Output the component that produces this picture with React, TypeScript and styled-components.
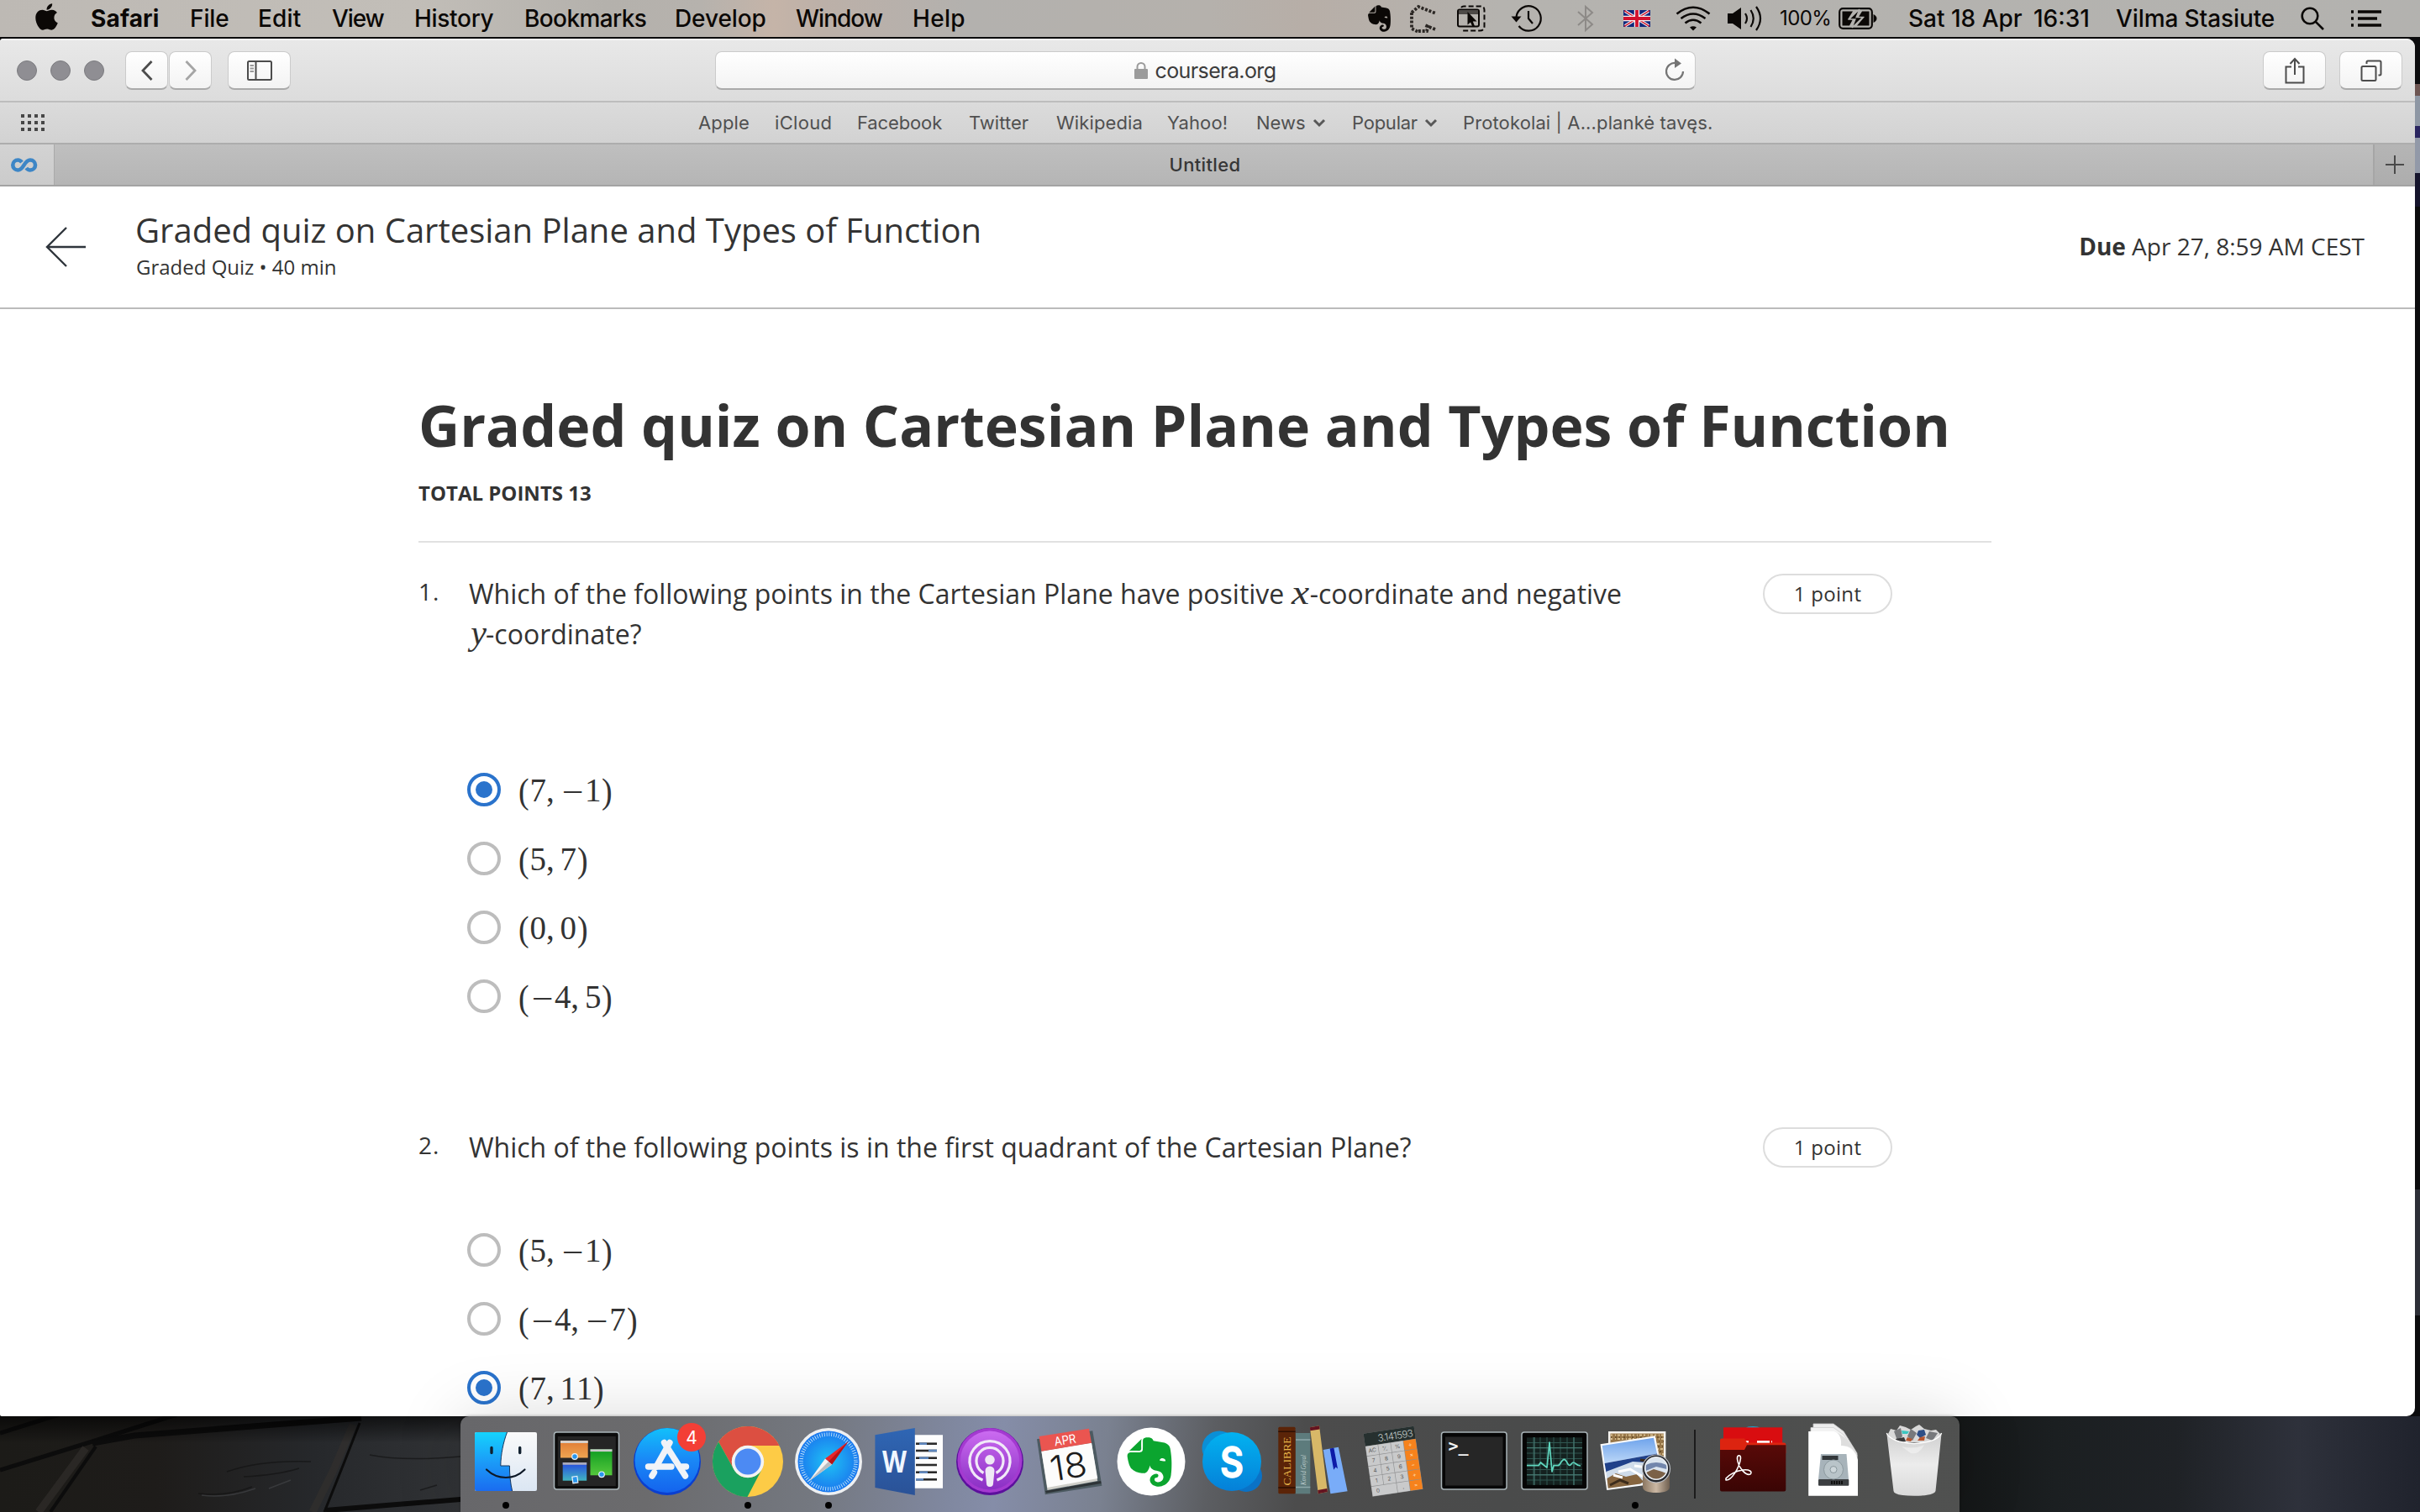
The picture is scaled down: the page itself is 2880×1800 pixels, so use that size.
import React from "react";
import styled, { createGlobalStyle } from "styled-components";
import { FaApple, FaEvernote } from "react-icons/fa";

const ui = `Inter, "Liberation Sans", sans-serif`;
const page = `"Open Sans", "Noto Sans", sans-serif`;
const math = `"Liberation Serif", serif`;

const GlobalStyle = createGlobalStyle`
  html, body { margin: 0; padding: 0; background: #111; }
  * { box-sizing: border-box; }
  svg { display: block; flex: none; overflow: visible; }
`;

const Desktop = styled.div`
  position: relative;
  width: 2880px;
  height: 1800px;
  overflow: hidden;
  display: flex;
  flex-direction: column;
  background: #0b0b0c;
`;

const Wallpaper = styled.svg`
  position: absolute;
  inset: 0;
`;

/* ---------- menu bar ---------- */

const MenuBar = styled.header`
  position: relative;
  flex: none;
  height: 44px;
  display: flex;
  align-items: center;
  justify-content: space-between;
  background: linear-gradient(90deg, #bdb9b4 0%, #c2beb8 17%, #b4b1ac 25%, #b6b2ad 29%, #c5b4a8 32%, #bcb0a8 34%, #b3b1ae 40%, #b5b1ac 50%, #b7aea7 54%, #b5b3af 62%, #b3b2af 100%);
  font: 450 28px/44px ${ui};
  color: #0b0806;
  white-space: pre;
`;

const MenuGroup = styled.div<{ $left?: number }>`
  display: flex;
  align-items: center;
  height: 44px;
  padding-left: ${(p) => p.$left ?? 0}px;
`;

const MenuItem = styled.span<{ $w: number; $track?: number; $bold?: boolean; $small?: boolean }>`
  flex: none;
  display: flex;
  align-items: center;
  width: ${(p) => p.$w}px;
  letter-spacing: ${(p) => p.$track ?? 0}px;
  font-weight: ${(p) => (p.$bold ? 700 : 450)};
  ${(p) => p.$small && "font-size: 24px; font-weight: 400;"}
`;

const AppleMark = styled(FaApple)`
  width: 27px;
  height: 36px;
  margin-top: -4px;
`;

const EvernoteMark = styled(FaEvernote)`
  width: 27px;
  height: 36px;
`;

const EvernoteLogo = styled(FaEvernote)`
  width: 53px;
  height: 67px;
  color: #0ba52f;
`;

/* ---------- browser window ---------- */

const BrowserWindow = styled.main`
  position: relative;
  flex: none;
  width: 2874px;
  height: 1640px;
  margin-top: 2px;
  overflow: hidden;
  display: flex;
  flex-direction: column;
  background: #fff;
  border-radius: 4px 10px 10px 2px;
`;

const Toolbar = styled.div`
  flex: none;
  height: 76px;
  display: flex;
  align-items: center;
  padding: 0 15px 0 20px;
  background: linear-gradient(#e8e8e8, #dcdcdc);
  border-top: 2px solid #f5f5f5;
  border-bottom: 2px solid #bdbdbd;
`;

const ToolGroup = styled.div<{ $gap: number; $end?: boolean }>`
  display: flex;
  align-items: center;
  gap: ${(p) => p.$gap}px;
  ${(p) => p.$end && "margin-left: auto;"}
`;

const TrafficLight = styled.i`
  width: 24px;
  height: 24px;
  margin-right: 16px;
  border-radius: 50%;
  border: 1px solid #7b7b7f;
  background: #8f8e93;
`;

const ToolButton = styled.button<{ $w: number; $ml?: number }>`
  width: ${(p) => p.$w}px;
  height: 46px;
  margin: 0 0 0 ${(p) => p.$ml ?? 0}px;
  padding: 0;
  display: flex;
  align-items: center;
  justify-content: center;
  border: 1px solid #cbcbcb;
  border-bottom: 2px solid #aaa;
  border-radius: 8px;
  background: linear-gradient(#fff, #f3f3f3);
`;

const AddressBar = styled.div`
  width: 1167px;
  height: 46px;
  margin-left: 505px;
  padding: 1px 12px 0;
  display: grid;
  grid-template-columns: 1fr auto 1fr;
  align-items: center;
  border: 1px solid #cbcbcb;
  border-bottom: 2px solid #aaa;
  border-radius: 8px;
  background: linear-gradient(#fff, #f3f3f3);
  font: 400 25px/42px ${ui};
  letter-spacing: -0.6px;
  color: #3c3c3c;
`;

const Address = styled.span`
  grid-column: 2;
  display: flex;
  align-items: center;
  gap: 8px;
`;

const ReloadSpot = styled.span`
  justify-self: end;
  margin-top: -3px;
`;

const Favorites = styled.nav`
  flex: none;
  height: 50px;
  display: flex;
  align-items: center;
  padding-left: 25px;
  background: linear-gradient(#dbdbdb, #d2d2d2);
  border-bottom: 2px solid #adadad;
  font: 400 22px/48px ${ui};
  color: #505050;
  white-space: pre;
`;

const Favorite = styled.span<{ $w: number; $track?: number }>`
  flex: none;
  display: flex;
  align-items: center;
  gap: 8px;
  width: ${(p) => p.$w}px;
  letter-spacing: ${(p) => (p.$track ?? 0) + 0.12}px;
`;

const GridSpot = styled.span`
  flex: none;
  width: 806px;
`;

const TabBar = styled.div`
  flex: none;
  height: 50px;
  display: flex;
  background: linear-gradient(#bfbfbf, #b5b5b5);
  border-bottom: 2px solid #a3a3a3;
`;

const PinnedTab = styled.div`
  width: 65px;
  display: flex;
  align-items: center;
  padding-left: 13px;
  background: linear-gradient(#d3d3d3, #cbcbcb);
  border-right: 1px solid #a9a9a9;
`;

const ActiveTab = styled.div`
  flex: 1;
  text-align: center;
  padding-right: 21px;
  font: 450 22px/48px ${ui};
  letter-spacing: 0.35px;
  color: #363636;
`;

const NewTab = styled.div`
  width: 50px;
  display: flex;
  align-items: center;
  justify-content: center;
  border-left: 2px solid #a6a6a6;
  background: linear-gradient(#b5b5b5, #adadad);
`;

/* ---------- quiz page ---------- */

const QuizHeader = styled.div`
  flex: none;
  height: 146px;
  display: flex;
  padding: 24px 60px 0 54px;
  border-bottom: 2px solid #bbb;
  font-family: ${page};
  color: #333;
`;

const BackSpot = styled.div`
  width: 107px;
  padding-top: 24px;
`;

const HeaderTitles = styled.div`
  flex: 1;
`;

const HeaderTitle = styled.div`
  font-size: 40px;
  line-height: 55px;
`;

const HeaderSub = styled.div`
  padding-left: 1px;
  font-size: 24px;
  line-height: 33px;
`;

const Due = styled.div`
  padding-top: 29px;
  font-size: 28px;
  line-height: 36px;
`;

const Quiz = styled.section`
  width: 1872px;
  margin-left: 498px;
  padding-top: 89px;
  font-family: ${page};
  color: #333;
`;

const QuizTitle = styled.h1`
  margin: 0;
  font-size: 68px;
  line-height: 97px;
  font-weight: 700;
  white-space: nowrap;
`;

const TotalPoints = styled.div`
  padding: 15px 0 0;
  height: 92px;
  font-size: 24px;
  line-height: 36px;
  font-weight: 700;
  border-bottom: 2px solid #e1e1e1;
`;

const Question = styled.article<{ $top: number }>`
  display: grid;
  grid-template-columns: 60px 1fr 272px;
  padding-top: ${(p) => p.$top}px;
`;

const Num = styled.div`
  font-size: 28px;
  line-height: 42px;
  letter-spacing: 1px;
`;

const Prompt = styled.div`
  font-size: 32px;
  line-height: 48px;
`;

const Variable = styled.i<{ $w: number; $pad?: number; $scale: number }>`
  display: inline-block;
  width: ${(p) => p.$w}px;
  padding-left: ${(p) => p.$pad ?? 0}px;
  font: italic 400 39px/0 ${math};
  transform: scaleX(${(p) => p.$scale});
  transform-origin: left;
`;

const Points = styled.div`
  width: 154px;
  height: 48px;
  border: 2px solid #ddd;
  border-radius: 24px;
  text-align: center;
  font-size: 24px;
  line-height: 44px;
  letter-spacing: 0.3px;
`;

const Options = styled.div<{ $top: number }>`
  grid-column: 2 / 4;
  padding-top: ${(p) => p.$top}px;
  margin-left: -2px;
`;

const Option = styled.label`
  height: 82px;
  display: flex;
  align-items: center;
  gap: 20px;
`;

const Radio = styled.span<{ $on?: boolean }>`
  width: 40px;
  height: 40px;
  display: flex;
  align-items: center;
  justify-content: center;
  border: 4px solid ${(p) => (p.$on ? "#2a73cc" : "#bdbdbd")};
  border-radius: 50%;
  background: #fff;
  &::after {
    content: "";
    width: 20px;
    height: 20px;
    border-radius: 50%;
    background: ${(p) => (p.$on ? "#2a73cc" : "transparent")};
  }
`;

const Formula = styled.span`
  display: flex;
  align-items: baseline;
  padding-top: 1px;
  font: 400 39px/48px ${math};
`;

const glyphWidth: Record<string, number> = { "(": 14.6, ")": 14.6, ",": 16.6, "−": 29.3 };

const Glyph = styled.span<{ $c: string }>`
  display: block;
  width: ${(p) => glyphWidth[p.$c] ?? 19.4}px;
  text-align: ${(p) => (p.$c === "," ? "left" : "center")};
  ${(p) => (p.$c === "(" || p.$c === ")") && "font-size: 43px; transform: translateY(1.5px) scaleX(0.88);"}
  ${(p) => p.$c === "−" && "transform: translateY(1.5px) scaleX(1.17);"}
`;

/* ---------- dock ---------- */

const DockArea = styled.footer`
  position: relative;
  flex: none;
  height: 114px;
  display: flex;
  justify-content: center;
`;

const Dock = styled.div`
  display: flex;
  width: 1784px;
  padding: 0 6px;
  border-radius: 10px 10px 0 0;
  background: linear-gradient(97deg, #67676a 0%, #6b6b6d 13%, #747880 24%, #8088a0 33%, #858da8 36%, #7a8190 43%, #5c5e62 50%, #4c4c4c 56%, #4a4b4b 70%, #505150 100%);
  box-shadow: 0 0 80px rgba(0, 0, 0, 0.15), 0 -1px 3px rgba(0, 0, 0, 0.2);
`;

const Separator = styled.div`
  width: 44px;
  padding: 16px 0 0 22px;
  &::after {
    content: "";
    display: block;
    width: 2px;
    height: 82px;
    background: #1c1c1c;
  }
`;

const DockTile = ({ children, running }: { children: React.ReactNode; running?: boolean }) => (
  <svg width="96" height="114" viewBox="0 0 96 114">
    {children}
    {running && <circle cx="48" cy="106" r="4" fill="#000" />}
  </svg>
);

const Finder = () => (
  <DockTile running>
    <rect x="11" y="19" width="74" height="70" rx="2" fill="url(#finderRight)" />
    <path d="M13 19H49.5C45 31 42 45 41.8 59H52.4C52.4 70 53.5 80 55.6 89H13a2 2 0 0 1-2-2V21a2 2 0 0 1 2-2Z" fill="url(#finderLeft)" />
    <path d="M49.5 19C45 31 42 45 41.8 59H52.4C52.4 70 53.5 80 55.6 89" fill="none" stroke="#14365e" strokeWidth="1" />
    <path d="M31 37.5v6M64.7 37.5v6" stroke="#10202f" strokeWidth="3.4" strokeLinecap="round" />
    <path d="M25 63.5Q35 73 48 73T70.5 63.5" fill="none" stroke="#0d1826" strokeWidth="2.2" strokeLinecap="round" />
  </DockTile>
);

const MissionControl = () => (
  <DockTile>
    <rect x="9.5" y="19" width="77" height="68" rx="3" fill="#0c0c0c" stroke="#aab6ba" strokeWidth="1.5" />
    <rect x="13.8" y="24" width="69" height="59" fill="#252525" />
    <rect x="17" y="29" width="32.7" height="20.5" fill="url(#mcOrange)" />
    <rect x="17" y="29" width="32.7" height="3" fill="#d5cfc9" />
    <rect x="52.5" y="39.3" width="26" height="31" fill="url(#mcGreen)" />
    <rect x="52.5" y="39.3" width="26" height="2.8" fill="#ccc" />
    <rect x="19.7" y="55" width="28.5" height="21.7" fill="url(#mcBlue)" />
    <rect x="19.7" y="55" width="28.5" height="2.8" fill="#aab" />
    <circle cx="34" cy="48" r="3.3" fill="#2996ee" stroke="#e8f2fa" strokeWidth="1.2" />
    <circle cx="66" cy="69.3" r="3.3" fill="#2996ee" stroke="#e8f2fa" strokeWidth="1.2" />
    <rect x="31.3" y="71.8" width="6" height="7.6" fill="#2996ee" stroke="#e8f2fa" strokeWidth="1.2" transform="rotate(-8 34 75)" />
  </DockTile>
);

const AppStore = () => (
  <DockTile>
    <circle cx="48" cy="54" r="40" fill="#0a3fd0" />
    <circle cx="48" cy="52.5" r="38.5" fill="url(#appStore)" />
    <g stroke="#f0f3f8" strokeWidth="7.4" strokeLinecap="round" fill="none">
      <path d="M51 31.5 35 60M32.5 67 30 71" />
      <path d="M25.5 60H53M66 60H70.5" />
      <path d="M44.5 31.5 69.5 71" />
    </g>
    <circle cx="77" cy="25" r="17" fill="#f33f36" />
    <text x="77" y="32.5" textAnchor="middle" fontFamily={ui} fontSize="21" fill="#fff">4</text>
  </DockTile>
);

const Chrome = () => (
  <DockTile running>
    <circle cx="48" cy="54" r="42" fill="#fdcb46" />
    <path d="M13.2 30.5A42 42 0 0 1 85.5 35H48A19 19 0 0 0 31.5 63.5Z" fill="#dc4f41" />
    <path d="M13.2 30.5A42 42 0 0 0 47.5 96L64.5 63.5A19 19 0 0 1 31.5 63.5Z" fill="#1aa15f" />
    <circle cx="48" cy="54" r="19.2" fill="#f3f3f3" />
    <circle cx="48" cy="54" r="15.5" fill="#4c8af3" />
  </DockTile>
);

const Safari = () => (
  <DockTile running>
    <circle cx="48" cy="54" r="40" fill="#eef0f2" />
    <circle cx="48" cy="54" r="36.5" fill="url(#safari)" />
    <circle cx="48" cy="54" r="32.5" fill="none" stroke="#bfe3fb" strokeWidth="4.6" strokeDasharray="0.9 1.94" />
    <path d="M71.5 30 44 50.5 52 57.5Z" fill="#e8262a" />
    <path d="M48 54 52 57.5 71.5 30Z" fill="#b81316" />
    <path d="M24.5 77.5 44 50.5 52 57.5Z" fill="#f3f3f3" />
    <path d="M24.5 77.5 48 54 52 57.5Z" fill="#b9bcc0" />
  </DockTile>
);

const wordLines = [
  { y: 32.7, x: 60, w: 9 },
  { y: 41, x: 71, w: 10 },
  { y: 49.7, x: 60, w: 11 },
  { y: 58, x: 56, w: 0 },
  { y: 66.7, x: 60, w: 10 },
  { y: 75.3, x: 56, w: 9 },
];

const Word = () => (
  <DockTile>
    <path d="M54 22.3H88V85.7H54Z" fill="#fdfdfd" />
    {wordLines.map(({ y, x, w }) => (
      <g key={y} strokeWidth="2.6">
        <path d={`M56 ${y}H81`} stroke="#2b2b2b" />
        <path d={`M${x} ${y}h${w}`} stroke="#5f87bd" />
      </g>
    ))}
    <path d="M7.4 22.3 54.8 14V94L7.4 85Z" fill="url(#word)" />
    <text x="30.5" y="66.5" textAnchor="middle" fontFamily={page} fontWeight="700" fontSize="35" fill="#f0f6ff" textLength="29" lengthAdjust="spacingAndGlyphs">W</text>
  </DockTile>
);

const Podcasts = () => (
  <DockTile>
    <circle cx="48" cy="54" r="40" fill="#5c0f9c" />
    <circle cx="48" cy="52.5" r="38.5" fill="#a43ad0" />
    <circle cx="48" cy="52.5" r="35" fill="url(#podcast)" />
    <g fill="none" stroke="#f1e9f8" strokeWidth="3.2">
      <path d="M39.5 76A24 24 0 1 1 56.5 76" />
      <path d="M40.5 67.5A16 16 0 1 1 55.5 67.5" />
    </g>
    <circle cx="48" cy="51.8" r="5.8" fill="#efe9f5" />
    <path d="M42.5 65a5.5 5.5 0 0 1 11 0L52 80a4 4 0 0 1-8 0Z" fill="#efe9f5" />
  </DockTile>
);

const Calendar = () => (
  <DockTile>
    <path d="M8 27.3 74.3 17.3 85.4 82.7 17.8 93.3Z" fill="#4c5a61" />
    <path d="M18 89 84 77 84.6 80 19 91.5Z" fill="#2e3437" />
    <path d="M13.4 41.7 73 31.7 80.2 77 20.5 88Z" fill="#cfcfc9" />
    <path d="M13.4 41.7 73 31.7 80.2 74 20.5 85Z" fill="#fcfcfb" />
    <path d="M10.6 24 70 14.7 73 31.7 13.4 41.7Z" fill="#ea5550" />
    <g transform="rotate(-9 43 50)" fontFamily={ui} textAnchor="middle">
      <text x="45" y="33.5" fontSize="14.5" fill="#fff" textLength="26" lengthAdjust="spacingAndGlyphs">APR</text>
      <text x="44" y="74.5" fontSize="41" fontWeight="300" fill="#1c1c1c" textLength="44" lengthAdjust="spacingAndGlyphs">18</text>
    </g>
  </DockTile>
);

const Evernote = () => (
  <DockTile>
    <circle cx="48" cy="54" r="40.5" fill="#fff" />
    <EvernoteLogo x="19.5" y="21" preserveAspectRatio="none" />
  </DockTile>
);

const Skype = () => (
  <DockTile>
    <circle cx="33" cy="38" r="20.5" fill="#0b8fd6" />
    <circle cx="65" cy="71" r="19" fill="#0a72c6" />
    <circle cx="48" cy="54" r="35" fill="url(#skype)" />
    <text x="48" y="73" textAnchor="middle" fontFamily={ui} fontWeight="600" fontSize="51" fill="#fff" stroke="#fff" strokeWidth="1.4" strokeLinejoin="round" textLength="28" lengthAdjust="spacingAndGlyphs">S</text>
  </DockTile>
);

const Calibre = () => (
  <DockTile>
    <rect x="7.3" y="12.8" width="20.3" height="79.5" rx="1.5" fill="#5b2408" />
    <path d="M7.3 18.3h20.3M7.3 85h20.3" stroke="#2d0f02" strokeWidth="1.4" />
    <text transform="translate(22.3 82.5) rotate(-90)" fontFamily={math} fontSize="13" fill="#e8b64a" textLength="58" lengthAdjust="spacingAndGlyphs">CALIBRE</text>
    <rect x="28" y="20" width="17.3" height="72.3" fill="#5d7b7c" />
    <path d="M28 28h17.3M28 84.5h17.3" stroke="#8fa9aa" strokeWidth="1.5" />
    <text transform="translate(39.5 82) rotate(-90)" fontFamily={math} fontStyle="italic" fontSize="9" fill="#c3d2d3" textLength="36" lengthAdjust="spacingAndGlyphs">Kovid Goyal</text>
    <path d="M44.9 13.3 56 11.3 65.9 90 54.8 92.3Z" fill="#d8b868" />
    <path d="M44.9 13.3 56 11.3 56.6 15.5 45.3 17.3ZM54.2 88 65.3 86 65.9 90 54.8 92.3Z" fill="#641420" />
    <path d="M60.7 40 78.9 36.7 89.6 89.3 69.4 92.3Z" fill="#79acf8" />
    <path d="M68.6 38.6 73.4 37.8 78 62.5 75.6 60.5 73.2 63.8Z" fill="#0d1ba8" />
  </DockTile>
);

const keys = ["AC", "⁺∕₋", "%", "÷", "7", "8", "9", "×", "4", "5", "6", "−", "1", "2", "3", "+", "0", "", ".", "="];

const Calculator = () => (
  <DockTile>
    <g transform="matrix(1 -.15 .145 1 12.6 20.7)" fontFamily={ui}>
      <rect x="0" y="0" width="60" height="75" fill="#8e8f90" />
      <rect x="0" y="0" width="60" height="15" fill="#26302f" />
      <text x="58" y="12" textAnchor="end" fontSize="11.5" fontWeight="300" fill="#c4cccb" textLength="42">3.141593</text>
      {keys.map((k, i) => {
        const x = (i % 4) * 15;
        const y = 15 + Math.floor(i / 4) * 12;
        return (
          <g key={i}>
            <rect x={x + 0.3} y={y + 0.3} width={i === 16 ? 29.4 : 14.4} height="11.4" fill={i % 4 === 3 ? "#f6821c" : "#c9cacb"} fillOpacity={i === 17 ? 0 : 1} />
            <text x={x + 7.5} y={y + 8.2} textAnchor="middle" fontSize="6.5" fill={i % 4 === 3 ? "#ffe2c4" : "#5c5c5c"}>{k}</text>
          </g>
        );
      })}
    </g>
  </DockTile>
);

const Terminal = () => (
  <DockTile>
    <rect x="9.5" y="19" width="77.5" height="68" rx="3" fill="#060606" stroke="#a9b4b8" strokeWidth="1.5" />
    <rect x="14" y="24.5" width="68.5" height="58" fill="#262626" />
    <text x="17.5" y="42" fontFamily={`"DejaVu Sans Mono", monospace`} fontWeight="700" fontSize="20" fill="#f4f4f4">&gt;_</text>
  </DockTile>
);

const ActivityMonitor = () => (
  <DockTile>
    <rect x="9" y="19" width="78" height="68" rx="3" fill="#050505" stroke="#a9b4b8" strokeWidth="1.5" />
    <rect x="15" y="25.3" width="66" height="56.5" fill="#14211f" />
    <path d="M23 25v57M31 25v57M39 25v57M47 25v57M55 25v57M63 25v57M71 25v57M15 31.5h66M15 37.7h66M15 44h66M15 50.5h66M15 57h66M15 63.5h66M15 69.8h66M15 76h66" stroke="#2f5650" strokeWidth="1" />
    <path d="M15 37.7h66M15 69.8h66M24 25v57M71 25v57" stroke="#4a8078" strokeWidth="1" />
    <path d="M15 58.7H29L31.5 55 35 58 39 61 42 31 45 66 47 58.7H52C55 58.7 56 51.5 59.5 51.3 63 51.5 63 58.7 66 58.5 68 58 68.5 55 70.5 55 73 55 74 59 79 59" fill="none" stroke="#5fd6be" strokeWidth="1.7" strokeLinejoin="round" />
  </DockTile>
);

const Preview = () => (
  <DockTile running>
    <rect x="16" y="18" width="68.4" height="58" fill="#f4f2ee" />
    <rect x="18.5" y="20.5" width="63.4" height="53" fill="#99784a" />
    <path d="M19 22.5H82M19 27H82M66 33H82M70 39H82M72 45H82M73 51H82" stroke="#d5bd8e" strokeWidth="2" strokeDasharray="2 3 1 2 3 2" />
    <path d="M19 25H82M66 30H82M70 36H82M72 42H82M73 48H82" stroke="#5f4726" strokeWidth="1.5" strokeDasharray="1 4 2 3" />
    <path d="M6.5 33.3 71.8 23.3 83 79 14.2 88Z" fill="#fafafa" />
    <path d="M8.8 35 70 25.7 74 44.5 11.6 56Z" fill="url(#sky)" />
    <path d="M11.6 56 74 44.5 76.5 57 13.5 67Z" fill="#20418a" />
    <path d="M13.3 66 45 54 76.3 56 80.5 77 15.8 85.7Z" fill="#cfdcea" />
    <path d="M14.5 74 25 68 37 72 50 69 58 78 54 80.5 15.8 85.7Z" fill="#86653f" />
    <path d="M28 66 42 63 52 69 60 73M22 70 33 73M47 59 62 61" fill="none" stroke="#fff" strokeWidth="3" />
    <path d="M18 82 30 76 40 80M54 52 62 53" stroke="#3c2c1c" strokeWidth="3" fill="none" />
    <path d="M57 64V84Q57 91 73 91T89 84V64Z" fill="url(#loupe)" />
    <circle cx="73" cy="62.5" r="16.5" fill="#24262b" stroke="#b9bcc2" strokeWidth="1.2" />
    <circle cx="73" cy="62" r="13.3" fill="#dbe4ee" />
    <path d="M60.5 58Q73 52 85.5 58V63L73 60 60.5 65Z" fill="#7286ac" />
    <path d="M61 67 70 63 80 66 85 68A13.3 13.3 0 0 1 61 67Z" fill="#7b6148" />
    <circle cx="73" cy="62" r="13.3" fill="none" stroke="#e7ebf0" strokeWidth="1.6" />
  </DockTile>
);

const AcrobatFolder = () => (
  <DockTile>
    <ellipse cx="48" cy="14" rx="8" ry="2" fill="#1fa2c8" />
    <rect x="13" y="13.3" width="70.2" height="30" fill="#d90d10" />
    <path d="M39 30.5h4M53 30.5H68M70 30.5h1" stroke="#fff" strokeWidth="2.4" />
    <path d="M9 28.5a2 2 0 0 1 2-2H38l3 5H85.3a2 2 0 0 1 2 2V44H9Z" fill="#dc2410" />
    <path d="M53 30.5H68" stroke="#fff" strokeWidth="2" />
    <path d="M9 40H38L41 34.3H87.3V87.5a2 2 0 0 1-2 2H11a2 2 0 0 1-2-2Z" fill="url(#acrobat)" />
    <path d="M16 76C22 77 32 62 33.5 50 33.5 45 29 46 29.5 51 31 62 40 71 45 69 48 66 44 63 36 64 28 65 19 70 16 74Z" fill="none" stroke="#fff" strokeWidth="1.6" strokeLinejoin="round" />
  </DockTile>
);

const DiskDocs = () => (
  <DockTile>
    <path d="M24 9H48L60 18 76 44V90H24Z" fill="#ececec" stroke="#c8c8c8" strokeWidth=".8" />
    <path d="M21 13.5H48L60 22 76 46V90H21Z" fill="#f3f3f3" stroke="#cfcfcf" strokeWidth=".8" />
    <path d="M18.2 18H48Q57 20 58 35 72 36 77 52V94.7H18.2Z" fill="#fff" />
    <path d="M49 18Q58 21 57 35 70 34 76.5 47 70 28 49 18Z" fill="#dedede" />
    <path d="M33 45H63.5L66 75H30Z" fill="#a7b3ba" />
    <rect x="30" y="75" width="36.3" height="7.8" rx="1" fill="#3c3f42" />
    <path d="M45 79h14" stroke="#111" strokeWidth="4" strokeDasharray="2 1" />
    <rect x="34.5" y="47" width="19" height="5" fill="#33383b" />
    <circle cx="48" cy="63.5" r="11.5" fill="#b9c4c9" stroke="#8b989e" />
    <circle cx="48" cy="63.5" r="4" fill="#cdd6da" stroke="#89969c" />
  </DockTile>
);

const Trash = () => (
  <DockTile>
    <path d="M17 21 20 15 27 17 31 11 38 13 44 16 50 12 54 10 60 15 68 17 74 16 79 21 74 31 22 31Z" fill="#d9d9d9" />
    <path d="M24 18 32 14 34 24 28 29ZM44 15 51 20 46 29 40 24ZM66 18 76 20 70 29 62 26Z" fill="#77797c" />
    <path d="M33 17 42 18 40 21 34 21Z" fill="#3bc6c0" />
    <path d="M53 17 60 16 62 22 55 26 51 22Z" fill="#2f4f86" />
    <path d="M55 25 61 24 60 29 52 29ZM40 25 46 27 44 30 38 29Z" fill="#b8562f" />
    <path d="M26 27 36 25 38 30 28 32Z" fill="#3a3a3c" />
    <path d="M15.3 20Q20 31 48 32.500 76 31 80.6 20L73.5 89Q72 94.7 48 94.7T23.5 89Z" fill="url(#trash)" />
    <path d="M15.3 20Q20 31 48 32.500 76 31 80.6 20" fill="none" stroke="#fff" strokeWidth="1.4" />
    <path d="M33 36Q48 40 60 34 54 46 44 44Z" fill="#fff" opacity=".4" />
  </DockTile>
);

const stops = (id: string, colors: string[], horizontal?: boolean) => (
  <linearGradient key={id} id={id} x1="0" y1="0" x2={horizontal ? 1 : 0} y2={horizontal ? 0 : 1}>
    {colors.map((c, i) => (
      <stop key={i} offset={i / (colors.length - 1)} stopColor={c} />
    ))}
  </linearGradient>
);

const Gradients = () => (
  <defs>
    {stops("finderLeft", ["#15d3fd", "#1b9cf8", "#1a6cf0"])}
    {stops("finderRight", ["#fafafa", "#dbe6f3"])}
    {stops("mcOrange", ["#df7b34", "#efa552"])}
    {stops("mcGreen", ["#0f9c22", "#55c83c"])}
    {stops("mcBlue", ["#2648e0", "#41b5c0"])}
    {stops("appStore", ["#12c0fb", "#1a87f6", "#1464ee"])}
    {stops("word", ["#2f66b4", "#2a5297"])}
    {stops("podcast", ["#cb6bf0", "#8a2fc4"])}
    {stops("skype", ["#02b2f0", "#0580d8"])}
    {stops("sky", ["#6ea3ec", "#bcd7f7"])}
    {stops("loupe", ["#8b7762", "#cbb8a4", "#6f5f50"], true)}
    {stops("acrobat", ["#580a08", "#3a0504"])}
    {stops("trash", ["#cfcfcf", "#ececec", "#d9d9d9"])}
    {stops("groundRight", ["#121414", "#1b1f21", "#1f2226", "#2e313b", "#20232d"], true)}
    {stops("groundLeft", ["#1c1b18", "#1e1c1a", "#26282b", "#323437"], true)}
    {stops("shade", ["#000000aa", "#00000000"])}
    <radialGradient id="safari">
      <stop offset="0" stopColor="#1fc3f5" />
      <stop offset="1" stopColor="#1a78ee" />
    </radialGradient>
  </defs>
);

const Background = () => (
  <Wallpaper width="2880" height="1800" viewBox="0 0 2880 1800">
    <Gradients />
    <rect x="0" y="1670" width="560" height="130" fill="url(#groundLeft)" />
    <g stroke="#0c0c0c" fill="none">
      <path d="M0 1706 70 1684" strokeWidth="5" />
      <path d="M0 1750 110 1716 210 1684" strokeWidth="5" />
      <path d="M110 1718 160 1709 300 1698 430 1688" strokeWidth="7" />
      <path d="M114 1722 60 1800" strokeWidth="4" />
      <path d="M428 1694 410 1740 386 1800" strokeWidth="3" />
      <path d="M388 1798 460 1792 560 1784" strokeWidth="6" />
    </g>
    <path d="M102 1724 46 1800M420 1696 396 1752 372 1800" stroke="#33312d" strokeWidth="9" opacity=".6" fill="none" />
    <path d="M270 1752Q310 1738 370 1740M290 1758Q330 1756 356 1748M236 1778Q270 1782 300 1770M440 1732Q480 1740 548 1734M500 1774 520 1768" stroke="#101011" strokeWidth="1.500" fill="none" opacity=".6" />
    <path d="M240 1780Q270 1784 304 1772M320 1772 346 1762" stroke="#46484b" strokeWidth="1.500" fill="none" opacity=".6" />
    <rect x="0" y="1684" width="560" height="34" fill="url(#shade)" />
    <rect x="2300" y="1670" width="580" height="130" fill="url(#groundRight)" />
    <g>
      <rect x="2860" y="46" width="20" height="1640" fill="#0c0c0e" />
      <rect x="2860" y="100" width="20" height="14" fill="#6d5552" />
      <rect x="2860" y="114" width="20" height="36" fill="#8e97a4" />
      <rect x="2860" y="150" width="20" height="14" fill="#2a2560" />
      <rect x="2860" y="164" width="20" height="42" fill="#9299a8" />
      <rect x="2860" y="206" width="20" height="40" fill="#15142c" />
      <rect x="2860" y="1416" width="20" height="150" fill="#2d2f37" />
    </g>
  </Wallpaper>
);

/* ---------- status icons ---------- */

const SketchIcon = () => (
  <svg width="34" height="36" viewBox="0 0 34 36" fill="none" stroke="#2c2825" strokeWidth="3.8" strokeDasharray="3 1.8">
    <path d="M2 11 10 4 31 12M2 11V30L10 34M30 31 18 26M22 26 20 33H10" />
  </svg>
);

const CaptureIcon = () => (
  <svg width="34" height="32" viewBox="0 0 34 32">
    <path d="M5 3Q6 1.500 8 1.500H28Q32.500 1.500 32.500 6V25Q32.500 30.500 27 30.500H6" fill="none" stroke="#0b0806" strokeWidth="2" strokeDasharray="6 3" />
    <rect x="1" y="5.500" width="25" height="20" rx="2" fill="none" stroke="#0b0806" strokeWidth="2" />
    <path d="M2 6h23v5H2z" fill="#4d4a47" />
    <path d="M12.500 8V23.500L16 20.500 18.500 26 21 25 18.800 19.500H23.500Z" fill="#0b0806" />
  </svg>
);

const TimeMachineIcon = () => (
  <svg width="38" height="34" viewBox="0 0 38 34" fill="none" stroke="#0b0806" strokeWidth="2.200">
    <path d="M6.500 15A14.700 14.700 0 1 1 9.500 26" />
    <path d="M21 8V17L26 23" />
    <path d="M.5 14.500H12.500L6.500 21.500Z" fill="#0b0806" stroke="none" />
  </svg>
);

const BluetoothIcon = () => (
  <svg width="20" height="32" viewBox="0 0 20 32" fill="none" stroke="#8d8a87" strokeWidth="2">
    <path d="M1 8 18 23 10 30V2L18 9 1 24" />
  </svg>
);

const FlagIcon = () => (
  <svg width="32" height="20" viewBox="0 0 32 20">
    <rect width="32" height="20" fill="#10277c" />
    <path d="M2 1.200 30 18.800M30 1.200 2 18.800" stroke="#f4f0f0" strokeWidth="3.600" />
    <path d="M1 .6 31 19.400M31 .6 1 19.400" stroke="#cf142b" strokeWidth="1.300" />
    <path d="M16 0V20M0 10H32" stroke="#f6f0f0" strokeWidth="6.400" />
    <path d="M16 0V20M0 10H32" stroke="#d2122e" strokeWidth="3.800" />
  </svg>
);

const WifiIcon = () => (
  <svg width="42" height="30" viewBox="0 0 42 30" fill="none" stroke="#0b0806" strokeWidth="2.600">
    <path d="M1.500 9.500Q21-6 40.500 9.500M6.500 15Q21 4 35.500 15M11.500 20.500Q21 13 30.500 20.500" />
    <path d="M17 25.500Q21 23 25 25.500L21 29.500Z" fill="#0b0806" stroke="none" />
  </svg>
);

const SoundIcon = () => (
  <svg width="42" height="32" viewBox="0 0 42 32" fill="none" stroke="#0b0806" strokeWidth="2.200">
    <path d="M0 10H6L16 3V29L6 22H0Z" fill="#0b0806" stroke="none" />
    <path d="M21 10Q25 16 21 22M27.500 6Q34 16 27.500 26M34 2Q44 16 34 30" />
  </svg>
);

const BatteryIcon = () => (
  <svg width="46" height="26" viewBox="0 0 46 26">
    <rect x="1.200" y="1.200" width="38.600" height="23.600" rx="4" fill="none" stroke="#0b0806" strokeWidth="2.200" />
    <path d="M41.500 8Q45.500 10 45.500 13T41.500 18Z" fill="#0b0806" />
    <path d="M4.500 4.500H17L11 14H17L13 21.500H4.500ZM36.500 4.500H28L24 11H31L22 21.500H36.500Z" fill="#0b0806" />
    <path d="M25 2 12.500 14H20L16 24 29 11.500H21Z" fill="#0b0806" stroke="#b4b3b0" strokeWidth="1.300" />
  </svg>
);

const SearchIcon = () => (
  <svg width="28" height="28" viewBox="0 0 28 28" fill="none" stroke="#0b0806" strokeWidth="2.600">
    <circle cx="11" cy="11" r="9.300" />
    <path d="M17.800 17.800 27 27" />
  </svg>
);

const ListIcon = () => (
  <svg width="36" height="20" viewBox="0 0 36 20" stroke="#0b0806" strokeWidth="3.600">
    <path d="M0 2H3M0 10H3M0 18H3M8 2H36M8 10H31M8 18H36" />
  </svg>
);

/* ---------- toolbar icons ---------- */

const Chevron = () => (
  <svg width="16" height="10" viewBox="0 0 16 10" fill="none" stroke="#585858" strokeWidth="3">
    <path d="M2 2 8 8 14 2" />
  </svg>
);

const CourseraIcon = () => (
  <svg width="32" height="17" viewBox="0 0 32 17" fill="none" stroke="#3d86c6" strokeWidth="4.600">
    <path d="M13 5.200C11.500 3.200 10 2.500 8.300 2.500A6 6 0 0 0 8.300 14.500C15.500 14.500 15.500 2.500 23 2.500A6 6 0 0 1 23 14.500C21 14.500 19.500 13.700 18.300 12" />
  </svg>
);

const Answer = ({ text, on }: { text: string; on?: boolean }) => (
  <Option>
    <Radio $on={on} />
    <Formula>
      {[...text].map((c, i) => (
        <Glyph key={i} $c={c}>{c}</Glyph>
      ))}
    </Formula>
  </Option>
);

export default function App() {
  return (
    <Desktop>
      <GlobalStyle />
      <Background />

      <MenuBar>
        <MenuGroup $left={42}>
          <MenuItem $w={66}><AppleMark /></MenuItem>
          <MenuItem $w={118} $bold $track={0.15}>Safari</MenuItem>
          <MenuItem $w={81} $track={-0.1}>File</MenuItem>
          <MenuItem $w={88} $track={0.2}>Edit</MenuItem>
          <MenuItem $w={98} $track={-1.1}>View</MenuItem>
          <MenuItem $w={131} $track={-0.3}>History</MenuItem>
          <MenuItem $w={179} $track={-0.6}>Bookmarks</MenuItem>
          <MenuItem $w={144} $track={-0.1}>Develop</MenuItem>
          <MenuItem $w={139} $track={-1}>Window</MenuItem>
          <MenuItem $w={70} $track={0.3}>Help</MenuItem>
        </MenuGroup>
        <MenuGroup>
          <MenuItem $w={50}><EvernoteMark /></MenuItem>
          <MenuItem $w={56}><SketchIcon /></MenuItem>
          <MenuItem $w={64}><CaptureIcon /></MenuItem>
          <MenuItem $w={79}><TimeMachineIcon /></MenuItem>
          <MenuItem $w={55}><BluetoothIcon /></MenuItem>
          <MenuItem $w={62}><FlagIcon /></MenuItem>
          <MenuItem $w={62}><WifiIcon /></MenuItem>
          <MenuItem $w={62}><SoundIcon /></MenuItem>
          <MenuItem $w={70} $small $track={-0.6}>100%</MenuItem>
          <MenuItem $w={83}><BatteryIcon /></MenuItem>
          <MenuItem $w={149} $track={0}>Sat 18 Apr</MenuItem>
          <MenuItem $w={98} $track={0}>16:31</MenuItem>
          <MenuItem $w={220} $track={-0.1}>Vilma Stasiute</MenuItem>
          <MenuItem $w={60}><SearchIcon /></MenuItem>
          <MenuItem $w={82}><ListIcon /></MenuItem>
        </MenuGroup>
      </MenuBar>

      <BrowserWindow>
        <Toolbar>
          <ToolGroup $gap={0}>
            <TrafficLight /><TrafficLight /><TrafficLight />
            <ToolButton $w={51} $ml={9}>
              <svg width="14" height="24" viewBox="0 0 14 24" fill="none" stroke="#4c4c4c" strokeWidth="2.800"><path d="M12.500 1 2 12 12.500 23" /></svg>
            </ToolButton>
            <ToolButton $w={51} $ml={1}>
              <svg width="14" height="24" viewBox="0 0 14 24" fill="none" stroke="#a5a5a5" strokeWidth="2.800"><path d="M1.500 1 12 12 1.500 23" /></svg>
            </ToolButton>
            <ToolButton $w={75} $ml={19}>
              <svg width="30" height="24" viewBox="0 0 30 24" fill="none" stroke="#4c4c4c" strokeWidth="2">
                <rect x="1" y="1" width="28" height="22" rx="1.500" />
                <path d="M10.500 1V23" />
                <path d="M3.500 6H8M3.500 9.500H8M3.500 13H8" stroke="#999" />
              </svg>
            </ToolButton>
          </ToolGroup>
          <AddressBar>
            <Address>
              <svg width="16" height="20" viewBox="0 0 16 20"><rect x="0" y="8" width="16" height="12" rx="1" fill="#9b9b9b" /><path d="M3.500 9V5.500a4.500 4.500 0 0 1 9 0V9" fill="none" stroke="#9b9b9b" strokeWidth="2" /></svg>
              coursera.org
            </Address>
            <ReloadSpot>
              <svg width="24" height="28" viewBox="0 0 24 28" fill="none" stroke="#757575" strokeWidth="2.200"><path d="M13 6A10 10 0 1 0 22 16" /><path d="M12 .5 20 6.500 12 12Z" fill="#757575" stroke="none" /></svg>
            </ReloadSpot>
          </AddressBar>
          <ToolGroup $gap={16} $end>
            <ToolButton $w={75}>
              <svg width="24" height="32" viewBox="0 0 24 32" fill="none" stroke="#4c4c4c" strokeWidth="2"><path d="M8 11.500H1.500V30.500H22.500V11.500H16M12 21V2M6.500 8 12 2 17.500 8" /></svg>
            </ToolButton>
            <ToolButton $w={75}>
              <svg width="26" height="26" viewBox="0 0 26 26" fill="none" stroke="#4c4c4c" strokeWidth="2"><rect x="1.500" y="8" width="17" height="17" rx="1.500" /><path d="M7.500 5V3Q7.500 1.500 9 1.500H23Q24.500 1.500 24.500 3V17Q24.500 18.500 23 18.500H21.500" /></svg>
            </ToolButton>
          </ToolGroup>
        </Toolbar>

        <Favorites>
          <GridSpot>
            <svg width="28" height="20" viewBox="0 0 28 20" stroke="#474747" strokeWidth="4" strokeDasharray="4 4"><path d="M0 2H28M0 10H28M0 18H28" /></svg>
          </GridSpot>
          <Favorite $w={91}>Apple</Favorite>
          <Favorite $w={98} $track={0.2}>iCloud</Favorite>
          <Favorite $w={133} $track={-0.25}>Facebook</Favorite>
          <Favorite $w={104} $track={-0.1}>Twitter</Favorite>
          <Favorite $w={132}>Wikipedia</Favorite>
          <Favorite $w={106}>Yahoo!</Favorite>
          <Favorite $w={114} $track={-0.15}>News<Chevron /></Favorite>
          <Favorite $w={132} $track={-0.36}>Popular<Chevron /></Favorite>
          <Favorite $w={320}>Protokolai | A...plankė tavęs.</Favorite>
        </Favorites>

        <TabBar>
          <PinnedTab><CourseraIcon /></PinnedTab>
          <ActiveTab>Untitled</ActiveTab>
          <NewTab>
            <svg width="22" height="22" viewBox="0 0 22 22" stroke="#4a4a4a" strokeWidth="2"><path d="M11 0V22M0 11H22" /></svg>
          </NewTab>
        </TabBar>

        <QuizHeader>
          <BackSpot>
            <svg width="49" height="48" viewBox="0 0 49 48" fill="none" stroke="#2f353c" strokeWidth="2.400"><path d="M25 1 2 24 25 47M2 24H48" /></svg>
          </BackSpot>
          <HeaderTitles>
            <HeaderTitle>Graded quiz on Cartesian Plane and Types of Function</HeaderTitle>
            <HeaderSub>Graded Quiz • 40 min</HeaderSub>
          </HeaderTitles>
          <Due><b>Due</b> Apr 27, 8:59 AM CEST</Due>
        </QuizHeader>

        <Quiz>
          <QuizTitle>Graded quiz on Cartesian Plane and Types of Function</QuizTitle>
          <TotalPoints>TOTAL POINTS 13</TotalPoints>
          <Question $top={36.5}>
            <Num>1.</Num>
            <Prompt>
              Which of the following points in the Cartesian Plane have positive <Variable $w={22} $scale={1.22}>x</Variable>-coordinate and negative
              <br />
              <Variable $w={20} $pad={2} $scale={1.08}>y</Variable>-coordinate?
            </Prompt>
            <Points>1 point</Points>
            <Options $top={120.5}>
              <Answer text="(7,−1)" on />
              <Answer text="(5,7)" />
              <Answer text="(0,0)" />
              <Answer text="(−4,5)" />
            </Options>
          </Question>
          <Question $top={115}>
            <Num>2.</Num>
            <Prompt>Which of the following points is in the first quadrant of the Cartesian Plane?</Prompt>
            <Points>1 point</Points>
            <Options $top={57}>
              <Answer text="(5,−1)" />
              <Answer text="(−4,−7)" />
              <Answer text="(7,11)" on />
            </Options>
          </Question>
        </Quiz>
      </BrowserWindow>

      <DockArea>
        <Dock>
          <Finder />
          <MissionControl />
          <AppStore />
          <Chrome />
          <Safari />
          <Word />
          <Podcasts />
          <Calendar />
          <Evernote />
          <Skype />
          <Calibre />
          <Calculator />
          <Terminal />
          <ActivityMonitor />
          <Preview />
          <Separator />
          <AcrobatFolder />
          <DiskDocs />
          <Trash />
        </Dock>
      </DockArea>
    </Desktop>
  );
}
